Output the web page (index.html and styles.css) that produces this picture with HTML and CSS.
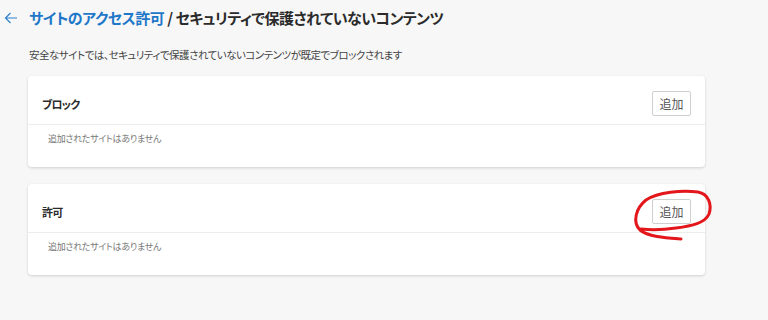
FILE: index.html
```html
<!DOCTYPE html>
<html lang="ja">
<head>
  <meta charset="UTF-8">
  <title>セキュリティで保護されていないコンテンツ</title>
  <link rel="stylesheet" href="styles.css">
</head>
<body>

  <div class="page-head">
    <button class="back-btn" aria-label="戻る">
      <svg width="14" height="12" viewBox="0 0 14 12">
        <path d="M13 6H1.5M6.5 1L1.5 6l5 5" fill="none" stroke="#2f80cf" stroke-width="1.2"/>
      </svg>
    </button>
    <h1><span class="crumb">サイトのアクセス許可</span> / セキュリティで保護されていないコンテンツ</h1>
  </div>

  <p class="desc">安全なサイトでは、セキュリティで保護されていないコンテンツが既定でブロックされます</p>

  <div class="card">
    <div class="card-head">
      <span class="card-title">ブロック</span>
      <button class="add-btn">追加</button>
    </div>
    <div class="card-body">追加されたサイトはありません</div>
  </div>

  <div class="card">
    <div class="card-head">
      <span class="card-title">許可</span>
      <button class="add-btn">追加</button>
    </div>
    <div class="card-body">追加されたサイトはありません</div>
  </div>

  <!-- 手書きの赤丸 -->
  <svg class="scribble" width="768" height="320" viewBox="0 0 768 320">
    <path d="M681 239 C668 238,648 237,640 230 C632 222,636 208,646 200 C658 192,682 190,698 192 C709 194,712 205,709 214 C705 223,692 226,676 228 C662 230,650 230,641 229"
          fill="none" stroke="#e3161b" stroke-width="3" stroke-linecap="round" stroke-linejoin="round"/>
  </svg>

</body>
</html>
```

FILE: styles.css
```css
body {
  margin: 0;
  padding: 0;
  background: #f7f7f7;
  font-family: 'Noto Sans CJK JP', 'Noto Sans', sans-serif;
  font-feature-settings: "palt";
  color: #333;
  position: relative;
  height: 320px;
  overflow: hidden;
}

.page-head {
  display: flex;
  align-items: center;
  height: 36px;
  padding-left: 4px;
}

.back-btn {
  background: none;
  border: none;
  padding: 0;
  width: 25px;
  height: 20px;
  display: flex;
  align-items: center;
  cursor: pointer;
}

.page-head h1 {
  margin: 0;
  font-size: 15px;
  font-weight: 600;
  color: #2b2b2b;
  line-height: 36px;
  letter-spacing: -0.5px;
}

.crumb {
  color: #1f78c8;
}

.desc {
  margin: 10px 0 12px 29px;
  font-size: 10.5px;
  line-height: 18px;
  letter-spacing: -0.5px;
  color: #444;
}

.card {
  width: 677px;
  margin: 0 0 17px 28px;
  background: #fff;
  border-radius: 4px;
  box-shadow: 0 1px 3px rgba(0, 0, 0, 0.16);
}

.card-head {
  display: flex;
  align-items: center;
  justify-content: space-between;
  padding: 15px 14px 8px 14px;
  border-bottom: 1px solid #ededed;
}

.card-title {
  font-size: 11px;
  font-weight: 600;
  letter-spacing: -0.8px;
  color: #2b2b2b;
}

.add-btn {
  width: 39px;
  height: 25px;
  padding: 0;
  background: #fff;
  border: 1px solid #cfcfcf;
  border-radius: 2px;
  font-family: inherit;
  font-size: 12px;
  color: #555;
  cursor: pointer;
}

.card-body {
  padding: 7px 20px 21px;
  font-size: 9px;
  line-height: 14px;
  letter-spacing: -0.3px;
  color: #777;
}

.scribble {
  position: absolute;
  top: 0;
  left: 0;
  pointer-events: none;
}
```
